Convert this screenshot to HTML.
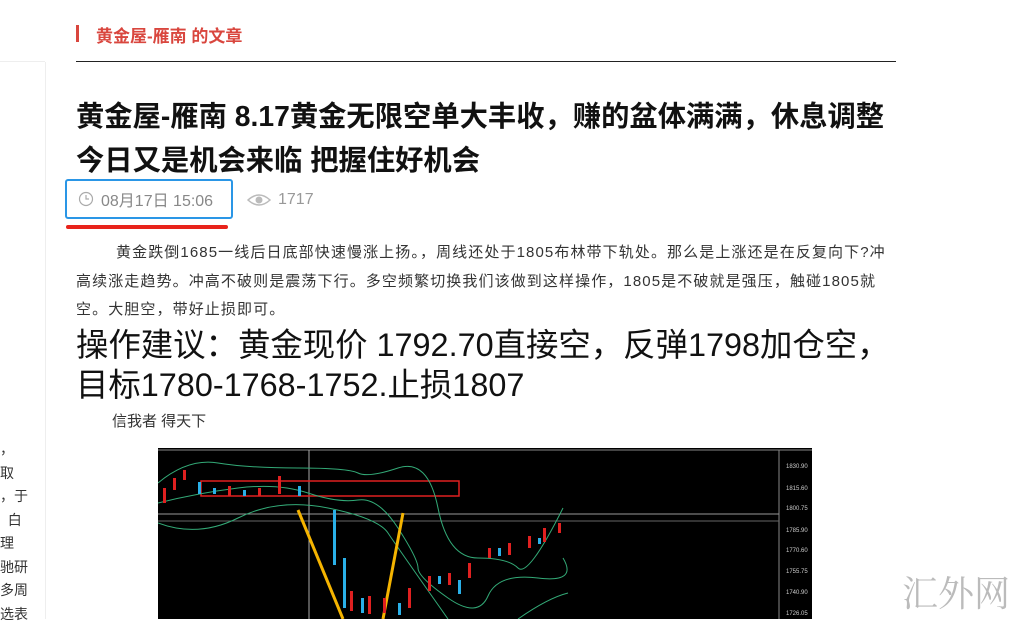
<!DOCTYPE html>
<html><head><meta charset="utf-8"><style>
body{margin:0;width:1032px;height:619px;overflow:hidden;background:#fff;font-family:"Liberation Sans","Noto Sans CJK SC",sans-serif;position:relative}
.a{position:absolute;white-space:nowrap}
</style></head><body>
<div class="a" style="left:76px;top:25px;width:3px;height:17px;background:#d9463e"></div>
<div class="a" style="left:96px;top:22px;font-size:17px;font-weight:bold;color:#d9463e">黄金屋-雁南 的文章</div>
<div class="a" style="left:76px;top:61px;width:820px;height:1px;background:#222"></div>
<div class="a" style="left:45px;top:62px;width:1px;height:557px;background:#eee"></div>
<div class="a" style="left:0;top:61px;width:45px;height:1px;background:#eee"></div>
<div class="a" style="left:76px;top:94px;font-size:28.3px;font-weight:bold;color:#111;line-height:44px">黄金屋-雁南 8.17黄金无限空单大丰收，赚的盆体满满，休息调整<br>今日又是机会来临 把握住好机会</div>
<div class="a" style="left:65px;top:179px;width:164px;height:36px;border:2px solid #2a96e6;border-radius:3px"></div>
<div class="a" style="left:66px;top:225px;width:162px;height:4px;background:#e8231b;border-radius:2px"></div>
<svg class="a" style="left:78px;top:191px" width="16" height="16"><circle cx="8" cy="8" r="6.5" fill="none" stroke="#aaa" stroke-width="1.2"/><path d="M8 4v4h3" fill="none" stroke="#aaa" stroke-width="1.2"/></svg>
<div class="a" style="left:101px;top:187px;font-size:16px;color:#888">08月17日 15:06</div>
<svg class="a" style="left:247px;top:192px" width="24" height="16"><path d="M1 8Q12 -2 23 8Q12 18 1 8Z" fill="none" stroke="#bbb" stroke-width="1.5"/><circle cx="12" cy="8" r="3.5" fill="#bbb"/></svg>
<div class="a" style="left:278px;top:191px;font-size:16px;color:#999">1717</div>
<div class="a" style="left:76px;top:239px;font-size:15px;letter-spacing:1.1px;color:#333;line-height:28.5px"><span style="padding-left:40px"></span>黄金跌倒1685一线后日底部快速慢涨上扬。，周线还处于1805布林带下轨处。那么是上涨还是在反复向下?冲<br>高续涨走趋势。冲高不破则是震荡下行。多空频繁切换我们该做到这样操作，1805是不破就是强压，触碰1805就<br>空。大胆空，带好止损即可。</div>
<div class="a" style="left:76px;top:325px;font-size:32.4px;color:#111;line-height:40px">操作建议：黄金现价 1792.70直接空，反弹1798加仓空，<br>目标1780-1768-1752.止损1807</div>
<div class="a" style="left:112px;top:410px;font-size:15px;color:#333">信我者 得天下</div>
<div class="a" style="left:0;top:438px;font-size:14px;color:#333;line-height:23.5px">，<br>取<br>，于<br>&nbsp;&nbsp;白<br>理<br>驰研<br>多周<br>选表</div>
<svg class="a" style="left:158px;top:448px" width="654" height="171">
<rect width="654" height="171" fill="#000"/>
<line x1="0" y1="2" x2="654" y2="2" stroke="#888"/>
<line x1="621" y1="2" x2="621" y2="171" stroke="#888"/>
<line x1="0" y1="66" x2="621" y2="66" stroke="#999"/>
<line x1="0" y1="73" x2="621" y2="73" stroke="#666"/>
<line x1="151" y1="2" x2="151" y2="171" stroke="#aaa"/>
<rect x="43" y="33" width="258" height="15" fill="none" stroke="#e02020" stroke-width="1.5"/>
<path d="M0 55Q40 45 80 40T150 45T200 52T240 80T260 120T290 150T330 148T380 130T405 110" fill="none" stroke="#3a7" stroke-width="1"/>
<path d="M0 35Q30 10 60 15T140 20T200 25T240 20T280 60T320 110T360 120T405 60" fill="none" stroke="#3a7" stroke-width="1"/>
<path d="M0 75Q40 90 80 70T170 60T230 85T290 171M360 171Q390 150 410 145" fill="none" stroke="#3a7" stroke-width="1"/>
<path d="M140 62L185 171M225 171L245 65" stroke="#f5b400" stroke-width="3"/>
<g fill="#e02020"><rect x="5" y="40" width="3" height="15"/><rect x="15" y="30" width="3" height="12"/><rect x="25" y="22" width="3" height="10"/><rect x="70" y="38" width="3" height="10"/><rect x="100" y="40" width="3" height="8"/><rect x="120" y="28" width="3" height="18"/><rect x="192" y="143" width="3" height="20"/><rect x="210" y="148" width="3" height="18"/><rect x="225" y="150" width="3" height="15"/><rect x="250" y="140" width="3" height="20"/><rect x="270" y="128" width="3" height="15"/><rect x="290" y="125" width="3" height="12"/><rect x="310" y="115" width="3" height="15"/><rect x="330" y="100" width="3" height="10"/><rect x="350" y="95" width="3" height="12"/><rect x="370" y="88" width="3" height="12"/><rect x="385" y="80" width="3" height="14"/><rect x="400" y="75" width="3" height="10"/></g>
<g fill="#2ab0e8"><rect x="40" y="34" width="3" height="12"/><rect x="55" y="40" width="3" height="6"/><rect x="85" y="42" width="3" height="6"/><rect x="140" y="38" width="3" height="10"/><rect x="175" y="62" width="3" height="55"/><rect x="185" y="110" width="3" height="50"/><rect x="203" y="150" width="3" height="15"/><rect x="240" y="155" width="3" height="12"/><rect x="280" y="128" width="3" height="8"/><rect x="300" y="132" width="3" height="14"/><rect x="340" y="100" width="3" height="8"/><rect x="380" y="90" width="3" height="6"/></g>
<g fill="#ccc" font-size="6" font-family="Liberation Sans"><text x="628" y="20">1830.90</text><text x="628" y="42">1815.60</text><text x="628" y="62">1800.75</text><text x="628" y="84">1785.90</text><text x="628" y="104">1770.60</text><text x="628" y="125">1755.75</text><text x="628" y="146">1740.90</text><text x="628" y="167">1726.05</text></g>
</svg>
<div class="a" style="left:902px;top:566px;font-size:36px;color:#bbb;font-family:'Noto Serif CJK SC',serif">汇外网</div>
</body></html>
